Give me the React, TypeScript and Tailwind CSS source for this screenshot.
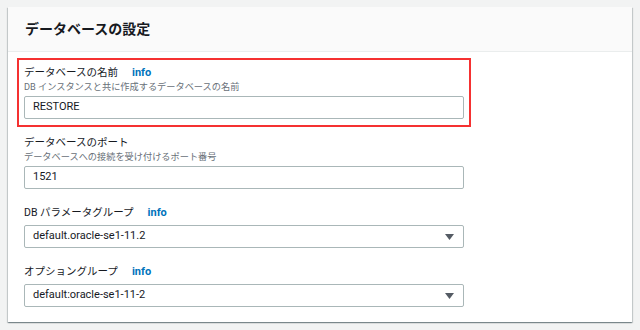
import { ReactNode } from "react";

const font = "font-['Roboto','Noto_Sans_CJK_JP',sans-serif]";

function Label({ text, info }: { text: string; info?: boolean }) {
  return (
    <div className="flex items-center h-[15px] text-[10.5px] leading-[15px] text-[#16191f]">
      <span>{text}</span>
      {info && <span className="ml-[14px] text-[11px] font-bold text-[#0073bb]">info</span>}
    </div>
  );
}

function Desc({ text }: { text: string }) {
  return <div className="h-[13px] text-[9.2px] leading-[13px] text-[#687078]">{text}</div>;
}

function TextBox({ value }: { value: string }) {
  return (
    <div className="w-[440px] h-[23px] flex items-center pl-2 border border-[#aab7b8] rounded-[2px] bg-white text-[11px] text-[#16191f]">
      {value}
    </div>
  );
}

function SelectBox({ value }: { value: string }) {
  return (
    <div className="w-[440px] h-[23px] flex items-center justify-between pl-2 pr-[9px] border border-[#aab7b8] rounded-[2px] bg-white text-[11px] text-[#16191f]">
      <span>{value}</span>
      <svg width="9" height="6" viewBox="0 0 9 6">
        <path d="M0 0h9L4.5 6z" fill="#545b64" />
      </svg>
    </div>
  );
}

function Field({ children }: { children: ReactNode }) {
  return <div className="flex flex-col">{children}</div>;
}

export default function App() {
  return (
    <div className={`${font} w-[640px] h-[330px] bg-[#f2f3f3] pt-[7px] pl-[8px]`}>
      <div className="w-[624px] bg-white shadow-[0_1px_1px_0_rgba(0,28,36,0.3),1px_1px_1px_0_rgba(0,28,36,0.15),-1px_1px_1px_0_rgba(0,28,36,0.15)]">
        <div className="h-[45px] flex items-center px-[17px] bg-[#fafafa] border-b border-[#eaeded]">
          <h2 className="text-[14px] font-bold text-[#16191f]">データベースの設定</h2>
        </div>
        <div className="flex flex-col gap-4 px-4 pt-[13px] pb-[15px]">
          {/* highlighted field */}
          <div className="-mx-[7px] -mt-[7px] -mb-[8px] border-2 border-[#f53131] px-[5px] pt-[5px] pb-[6px] w-[454px]">
            <Field>
              <Label text="データベースの名前" info />
              <Desc text="DB インスタンスと共に作成するデータベースの名前" />
              <div className="mt-[3px]">
                <TextBox value="RESTORE" />
              </div>
            </Field>
          </div>
          <Field>
            <Label text="データベースのポート" />
            <Desc text="データベースへの接続を受け付けるポート番号" />
            <div className="mt-[3px]">
              <TextBox value="1521" />
            </div>
          </Field>
          <Field>
            <Label text="DB パラメータグループ" info />
            <div className="mt-[5px]">
              <SelectBox value="default.oracle-se1-11.2" />
            </div>
          </Field>
          <Field>
            <Label text="オプショングループ" info />
            <div className="mt-[5px]">
              <SelectBox value="default:oracle-se1-11-2" />
            </div>
          </Field>
        </div>
      </div>
    </div>
  );
}
